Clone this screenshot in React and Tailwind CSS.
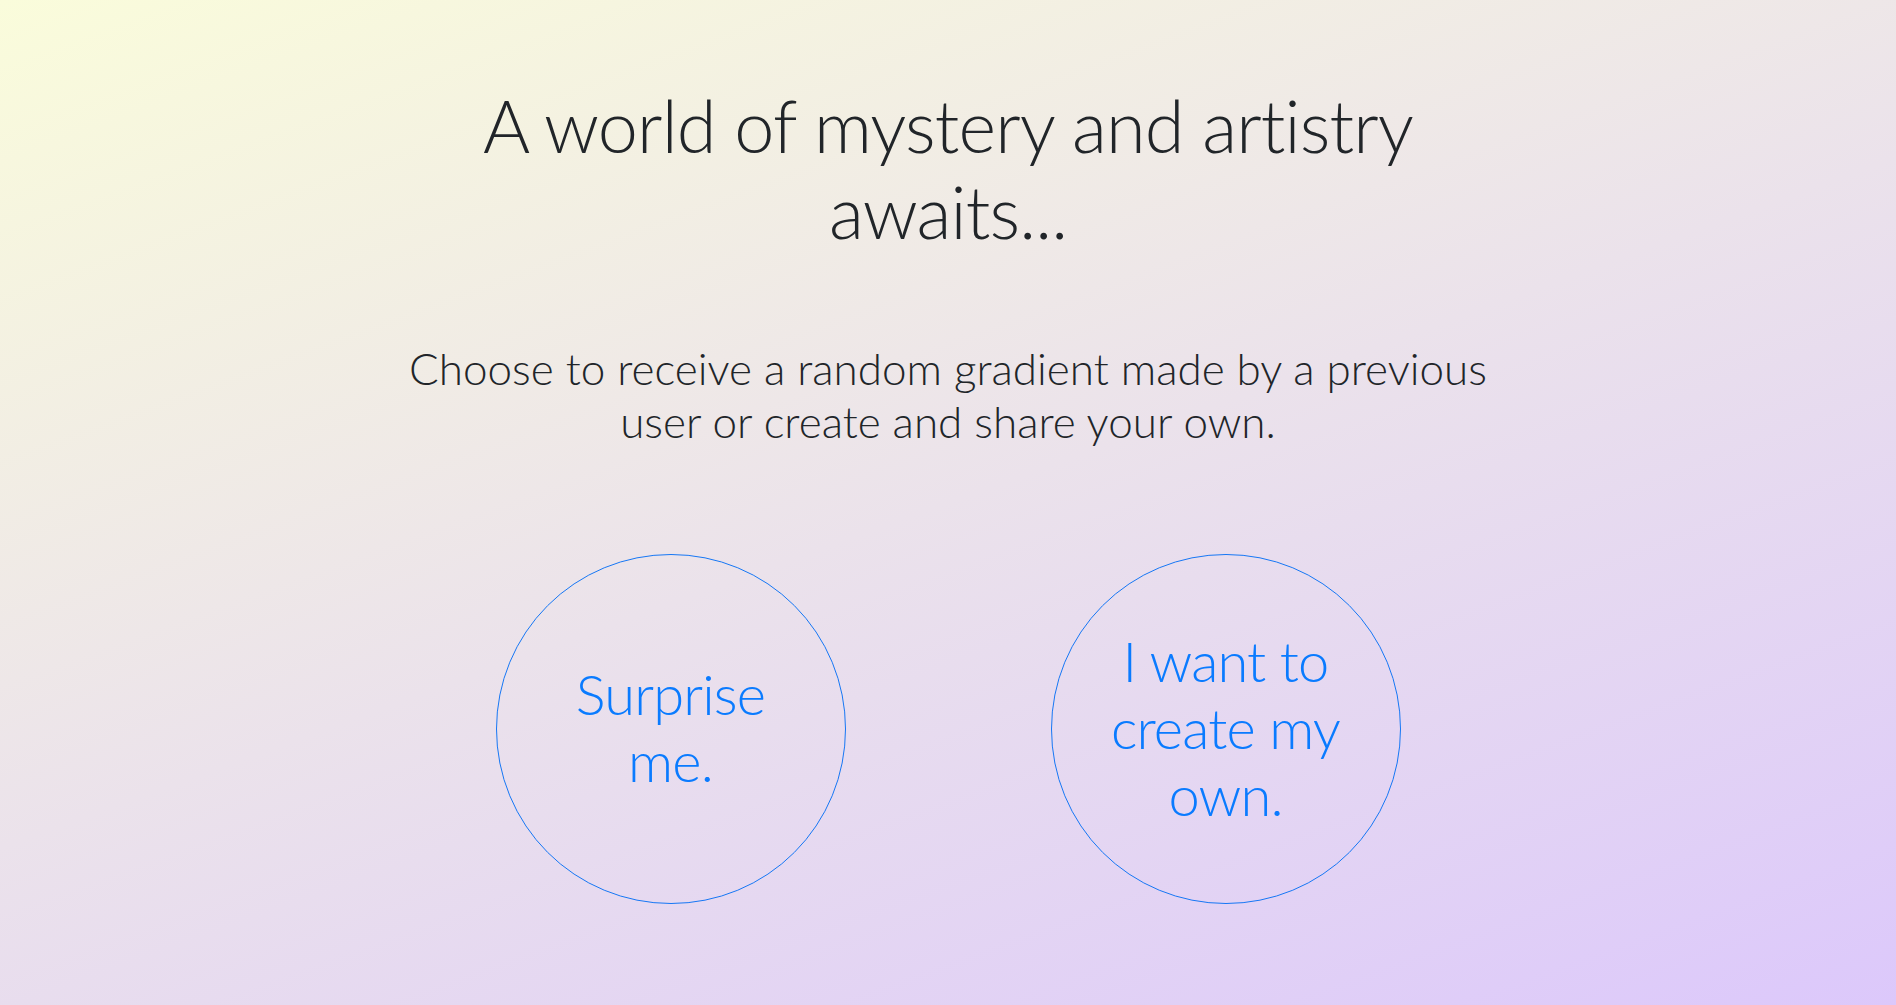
import React from "react";

export default function App() {
  return (
    <div
      className="min-h-[1005px] w-full bg-[linear-gradient(160deg,#fafcdb,#dcc8fb)] text-[#212529]"
      style={{ fontFamily: "Lato, 'Open Sans', sans-serif" }}
    >
      <div className="mx-auto w-[1140px] px-[15px] pt-[82px] text-center">
        <h1 className="text-[72px] font-light leading-[1.2] tracking-[-0.012em]">
          A world of mystery and artistry
          <br />
          awaits...
        </h1>
        <p className="mt-[87px] text-[44px] font-light leading-[1.2]">
          Choose to receive a random gradient made by a previous
          <br />
          user or create and share your own.
        </p>
        <div className="mt-[107px] grid grid-cols-2">
          <div className="flex justify-center">
            <button className="flex h-[350px] w-[350px] items-center justify-center rounded-full border border-[#1677f5] text-[56px] font-light leading-[1.2] tracking-[-0.015em] text-[#0a7bff]">
              <span className="-translate-y-[2px]">
                Surprise
                <br />
                me.
              </span>
            </button>
          </div>
          <div className="flex justify-center">
            <button className="flex h-[350px] w-[350px] items-center justify-center rounded-full border border-[#1677f5] text-[56px] font-light leading-[1.2] tracking-[-0.015em] text-[#0a7bff]">
              <span className="-translate-y-[2px]">
                I want to
                <br />
                create my
                <br />
                own.
              </span>
            </button>
          </div>
        </div>
      </div>
    </div>
  );
}
